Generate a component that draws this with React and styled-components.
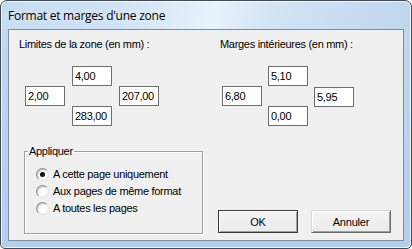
import React from 'react';
import styled, { createGlobalStyle } from 'styled-components';

const Global = createGlobalStyle`
  html, body { margin: 0; padding: 0; background: #ffffff; }
  body { width: 412px; height: 249px; overflow: hidden; }
  * { box-sizing: border-box; }
`;

const Window = styled.div`
  width: 412px;
  height: 249px;
  border: 1px solid #3d4a58;
  border-radius: 7px 7px 5px 5px;
  display: flex;
  flex-direction: column;
  background:
    linear-gradient(100deg, #c6dcf1 0%, #d0e3f5 30%, #e9f2fb 52%, #d2e4f5 66%, #bfd6ee 100%) top / 100% 28px no-repeat,
    linear-gradient(to bottom, #c3d9ef 0%, #b3cfec 100%);
  box-shadow: inset 0 0 0 1px rgba(255, 255, 255, 0.75);
  overflow: hidden;
`;

const TitleBar = styled.div`
  height: 28px;
  flex: none;
  display: flex;
  align-items: center;
  padding: 0 0 0 7px;
  font-family: "Open Sans", "Noto Sans", sans-serif;
  font-size: 12px;
  letter-spacing: -0.25px;
  color: #000;
  text-shadow: 0 0 6px rgba(255, 255, 255, 0.9);
`;

const Client = styled.div`
  flex: 1;
  margin: 0 7px 7px 7px;
  border: 1px solid #7f8d9b;
  background: #f0f0f0;
  padding: 8px 0 0 10px;
  font-family: "Liberation Sans", Arial, sans-serif;
  font-size: 11px;
  line-height: 13px;
  letter-spacing: -0.3px;
  color: #000;
  display: flex;
  flex-direction: column;
`;

const TopRow = styled.div`
  display: flex;
`;

const Panel = styled.div`
  width: ${p => p.$w}px;
  display: flex;
  flex-direction: column;
`;

const Label = styled.div`
  height: 13px;
  white-space: nowrap;
`;

const Cross = styled.div`
  display: grid;
  grid-template-columns: 40px 40px 40px;
  grid-template-rows: 20px 20px 20px;
  column-gap: ${p => p.$gap}px;
  margin: 15px 0 0 ${p => p.$left}px;
`;

const Field = styled.div`
  grid-column: ${p => p.$col};
  grid-row: ${p => p.$row};
  width: 40px;
  height: 20px;
  border: 1px solid #6e6e6e;
  background: #ffffff;
  padding: 3px 0 0 2px;
  white-space: nowrap;
  overflow: hidden;
  margin-top: ${p => p.$dy || 0}px;
`;

const BottomRow = styled.div`
  display: flex;
  align-items: flex-end;
  margin-top: 19px;
`;

const Group = styled.fieldset`
  margin: 0 0 0 5px;
  padding: 0;
  width: 179px;
  border: 1px solid #a0a0a0;
  box-shadow: inset 1px 1px 0 #ffffff, 1px 1px 0 #ffffff;
`;

const Legend = styled.legend`
  margin-left: 3px;
  padding: 0 1px;
  line-height: 13px;
`;

const RadioList = styled.div`
  display: flex;
  flex-direction: column;
  padding: 8px 0 16px 11px;
`;

const RadioRow = styled.label`
  height: 17px;
  display: flex;
  align-items: center;
  gap: 4px;
  white-space: nowrap;
`;

const RadioDot = styled.span`
  width: 13px;
  height: 13px;
  border-radius: 50%;
  flex: none;
  border: 1px solid;
  border-color: #8f8f8f #e2e2e2 #e2e2e2 #8f8f8f;
  background: radial-gradient(circle at 60% 60%, #ffffff 0%, #f7f7f7 55%, #dcdcdc 100%);
  box-shadow: inset 1px 1px 0 #c8c8c8;
  display: flex;
  align-items: center;
  justify-content: center;
  &::after {
    content: "";
    width: 5px;
    height: 5px;
    border-radius: 50%;
    background: ${p => (p.$on ? '#111' : 'transparent')};
  }
`;

const Buttons = styled.div`
  display: flex;
  gap: 13px;
  margin: 0 0 1px 15px;
`;

const Button = styled.button`
  width: 80px;
  height: 23px;
  padding: 0;
  font-family: "Liberation Sans", Arial, sans-serif;
  font-size: 11px;
  letter-spacing: -0.2px;
  color: #000;
  background: linear-gradient(to bottom, #f4f4f4, #ebebeb);
  border: 1px solid;
  border-color: ${p => (p.$default ? '#3a3a3a' : '#d8d8d8 #6a6a6a #6a6a6a #d8d8d8')};
  box-shadow: inset 1px 1px 0 #ffffff, inset -1px -1px 0 #a0a0a0;
`;

export default function App() {
  return (
    <>
      <Global />
      <Window>
        <TitleBar>Format et marges d'une zone</TitleBar>
        <Client>
          <TopRow>
            <Panel $w={201}>
              <Label>Limites de la zone (en mm) :</Label>
              <Cross $gap={7} $left={6}>
                <Field $col={2} $row={1}>4,00</Field>
                <Field $col={1} $row={2}>2,00</Field>
                <Field $col={3} $row={2}>207,00</Field>
                <Field $col={2} $row={3}>283,00</Field>
              </Cross>
            </Panel>
            <Panel $w={180}>
              <Label>Marges intérieures (en mm) :</Label>
              <Cross $gap={6} $left={2}>
                <Field $col={2} $row={1}>5,10</Field>
                <Field $col={1} $row={2}>6,80</Field>
                <Field $col={3} $row={2} $dy={1}>5,95</Field>
                <Field $col={2} $row={3}>0,00</Field>
              </Cross>
            </Panel>
          </TopRow>
          <BottomRow>
            <Group>
              <Legend>Appliquer</Legend>
              <RadioList>
                <RadioRow><RadioDot $on />A cette page uniquement</RadioRow>
                <RadioRow><RadioDot />Aux pages de même format</RadioRow>
                <RadioRow><RadioDot />A toutes les pages</RadioRow>
              </RadioList>
            </Group>
            <Buttons>
              <Button $default>OK</Button>
              <Button>Annuler</Button>
            </Buttons>
          </BottomRow>
        </Client>
      </Window>
    </>
  );
}
